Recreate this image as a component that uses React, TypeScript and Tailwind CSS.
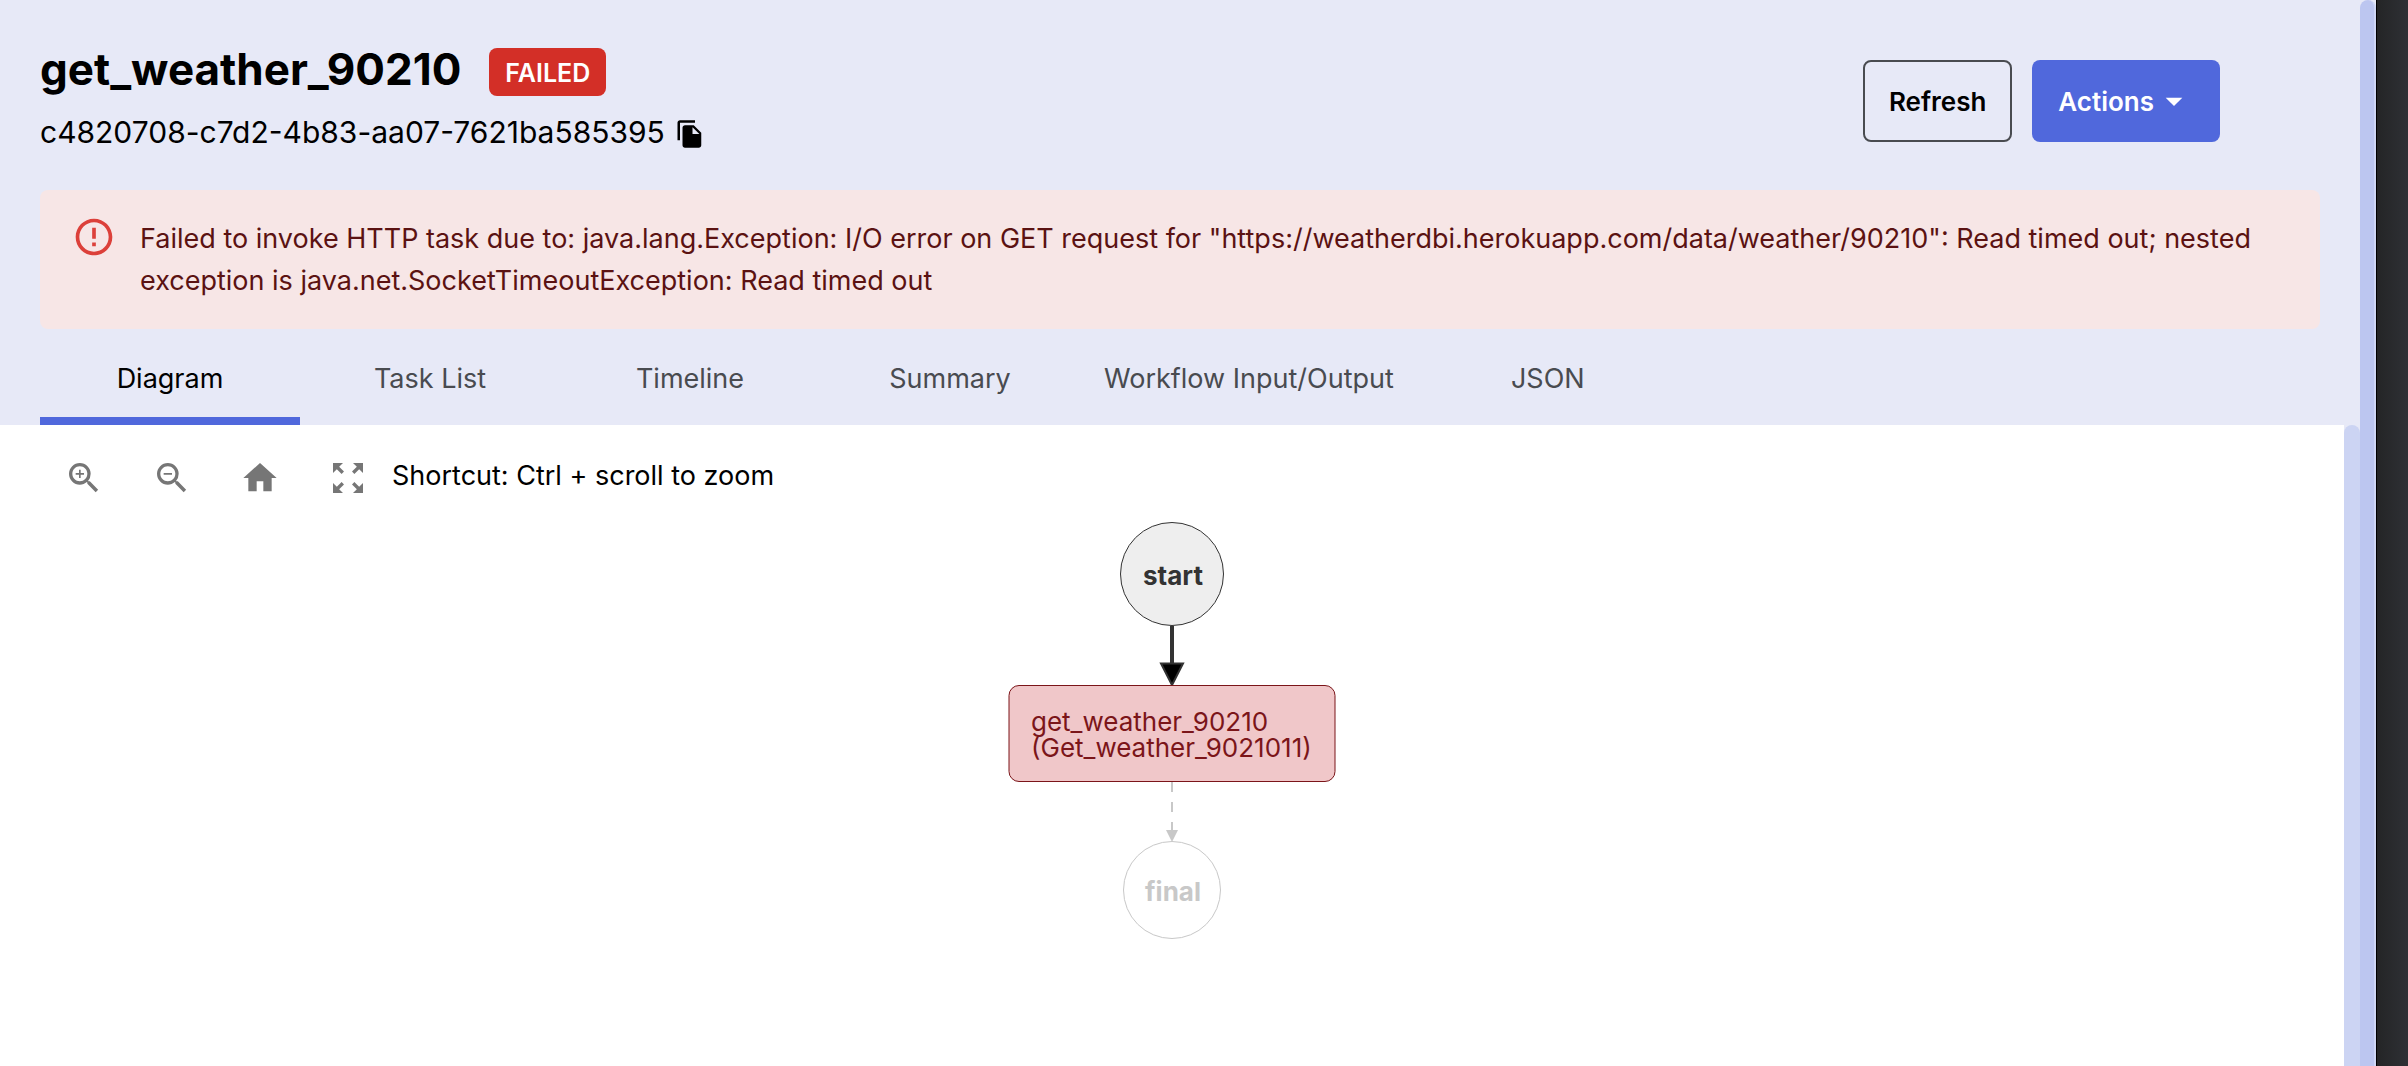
import { useState } from "react";
import {
  MdArrowDropDown,
  MdErrorOutline,
  MdFileCopy,
  MdHome,
  MdZoomIn,
  MdZoomOut,
  MdZoomOutMap,
} from "react-icons/md";

const tabs = ["Diagram", "Task List", "Timeline", "Summary", "Workflow Input/Output", "JSON"];

const tools = [
  { label: "Zoom in", Icon: MdZoomIn },
  { label: "Zoom out", Icon: MdZoomOut },
  { label: "Reset view", Icon: MdHome },
  { label: "Fit to screen", Icon: MdZoomOutMap },
];

function Header() {
  return (
    <header className="flex items-start justify-between pr-[100px]">
      <div>
        <div className="flex items-start gap-7">
          <h1 className="text-[44px] leading-[42px] font-bold">get_weather_90210</h1>
          <span className="rounded-lg bg-[#d32f27] px-4 text-[25px] leading-[50px] font-semibold text-white h-12">
            FAILED
          </span>
        </div>
        <div className="mt-4 flex items-center gap-[10px]">
          <span className="text-[30px] leading-[40px]">c4820708-c7d2-4b83-aa07-7621ba585395</span>
          <button type="button" aria-label="Copy workflow id" className="pt-1">
            <MdFileCopy className="size-[30px]" />
          </button>
        </div>
      </div>
      <div className="mt-3 flex gap-5 text-[26px] font-semibold">
        <button type="button" className="h-[82px] rounded-lg border-2 border-[#494b50] px-6">
          Refresh
        </button>
        <button
          type="button"
          className="flex h-[82px] items-center rounded-lg bg-[#5068dc] px-[26px] text-white"
        >
          Actions
          <MdArrowDropDown className="size-10" />
        </button>
      </div>
    </header>
  );
}

function ErrorAlert() {
  return (
    <div role="alert" className="mt-[38px] flex rounded-lg bg-[#f7e6e6] px-8 py-[25px] text-[#5b1212]">
      <MdErrorOutline className="size-11 shrink-0 text-[#dc403a]" />
      <p className="ml-6 pt-[3px] pb-[2px] text-[27px] leading-[42px]">
        Failed to invoke HTTP task due to: java.lang.Exception: I/O error on GET request for
        &quot;https://weatherdbi.herokuapp.com/data/weather/90210&quot;: Read timed out; nested
        exception is java.net.SocketTimeoutException: Read timed out
      </p>
    </div>
  );
}

function WorkflowDiagram() {
  return (
    <svg
      viewBox="0 0 336 420"
      className="mx-auto h-[420px] w-[336px]"
      role="img"
      aria-label="Workflow diagram"
    >
      <circle cx="168" cy="52" r="51.500" fill="#eeeeee" stroke="#333333" />
      <text x="169" y="63" textAnchor="middle" fontSize="26" fontWeight="700" fill="#333333">
        start
      </text>
      <path d="M168 104V143" stroke="#333333" strokeWidth="4" />
      <path d="M157 141.500H179L168 163Z" fill="#000000" stroke="#333333" strokeWidth="2" />
      <rect x="5" y="163.500" width="326" height="96" rx="10" fill="#f0c7c9" stroke="#7b1519" />
      <text fontSize="26" fill="#7b1519">
        <tspan x="27" y="209">
          get_weather_90210
        </tspan>
        <tspan x="27" y="235">
          (Get_weather_9021011)
        </tspan>
      </text>
      <path d="M168 260V310" stroke="#c8c8c8" strokeWidth="2" strokeDasharray="10 10" />
      <path d="M162 308H174L168 320Z" fill="#c8c8c8" />
      <circle cx="168" cy="368" r="48.500" fill="#ffffff" stroke="#c8c8c8" />
      <text x="169" y="379" textAnchor="middle" fontSize="26" fontWeight="700" fill="#c8c8c8">
        final
      </text>
    </svg>
  );
}

export default function App() {
  const [active, setActive] = useState("Diagram");

  return (
    <div className="flex h-screen overflow-hidden bg-[#e7e9f7] font-['Inter',sans-serif] text-black">
      <div className="flex min-w-0 flex-1 flex-col">
        <div className="px-10 pt-12">
          <Header />
          <ErrorAlert />
          <div role="tablist" className="flex">
            {tabs.map((tab) => (
              <button
                key={tab}
                type="button"
                role="tab"
                aria-selected={tab === active}
                onClick={() => setActive(tab)}
                className={`h-24 min-w-[260px] border-b-8 px-6 pt-3 text-[27px] ${
                  tab === active ? "border-[#5068dc] text-black" : "border-transparent text-[#494b50]"
                }`}
              >
                {tab}
              </button>
            ))}
          </div>
        </div>
        <main className="flex min-h-0 flex-1">
          <div className="min-w-0 flex-1 bg-white">
            <div className="flex items-start pt-[9px] pl-10">
              {tools.map(({ label, Icon }) => (
                <button key={label} type="button" aria-label={label} className="p-6 text-[#767676]">
                  <Icon className="size-10" />
                </button>
              ))}
              <span className="pt-[22px] text-[27px] leading-[40px]">
                Shortcut: Ctrl + scroll to zoom
              </span>
            </div>
            <WorkflowDiagram />
          </div>
          <div className="w-4 shrink-0 rounded-t-full bg-[#ccd4f3]" />
        </main>
      </div>
      <div className="w-4 shrink-0 rounded-t-full border-r-2 border-[#cfd7f6] bg-[#bcc6f0]" />
      <div className="w-8 shrink-0 border-l border-black bg-linear-to-r from-[#242526] to-[#2e3035]" />
    </div>
  );
}
